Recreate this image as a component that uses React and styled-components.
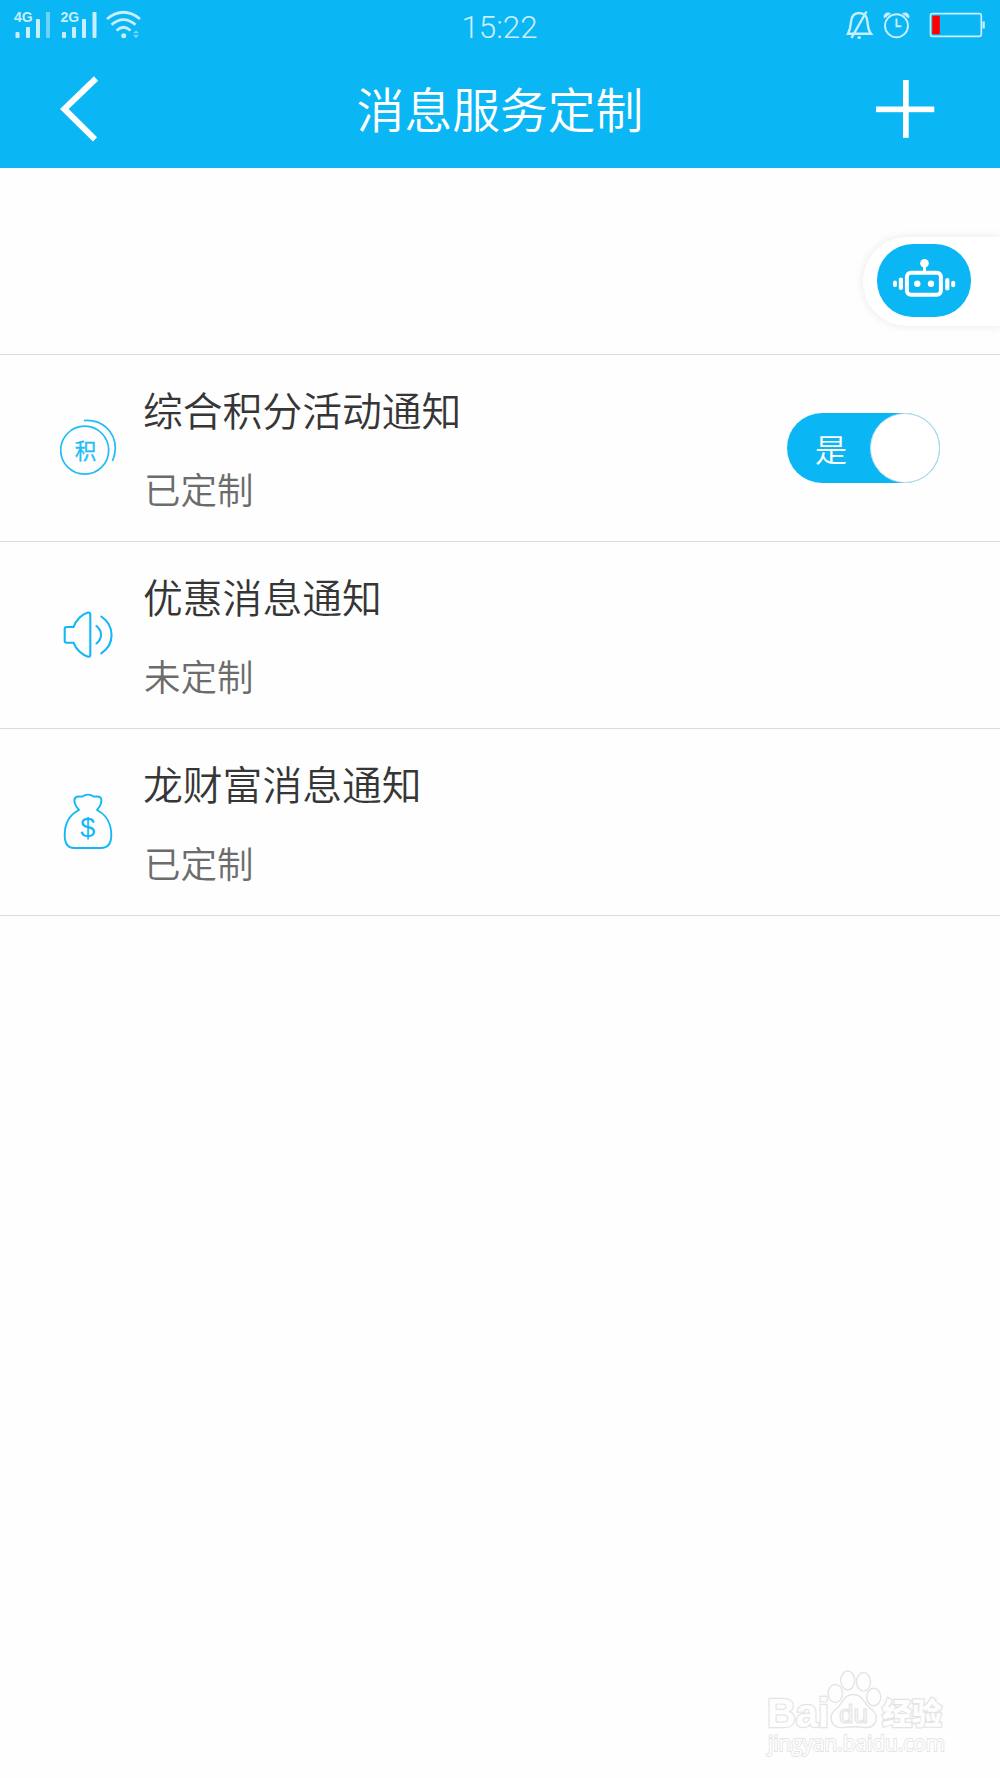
import React, {useState} from 'react';
import styled, {createGlobalStyle} from 'styled-components';

const GlobalStyle = createGlobalStyle`
    * {
        box-sizing:border-box;
    }

    body {
        margin:0;
        background-color:#fefefe;
        font-family:"Noto Sans CJK SC", "Noto Sans", sans-serif;
    }
`;

const Page = styled.div`
    width:1000px;
    height:1778px;
    display:flex;
    flex-direction:column;
    background-color:#fefefe;
    overflow:hidden;
    position:relative;
`;

const Header = styled.header`
    height:168px;
    background-color:#0bb6f4;
    color:white;
`;

const StatusBar = styled.div`
    height:54px;
    padding:0 15px 0 14px;
    display:grid;
    grid-template-columns:1fr auto 1fr;
    align-items:start;
`;

const StatusSide = styled.div`
    display:flex;
    justify-content:${({$isRight}) => $isRight ? 'flex-end' : 'flex-start'};
`;

const Clock = styled.span`
    font-family:Roboto, sans-serif;
    font-size:31.4px;
    font-weight:300;
    line-height:56px;
    color:#c8effd;
`;

const NavBar = styled.div`
    height:114px;
    padding:0 65px 0 60px;
    display:flex;
    justify-content:space-between;
    align-items:flex-start;
`;

const NavButton = styled.button`
    padding:${({$topGap}) => $topGap}px 0 0;
    border:none;
    background:none;
    display:flex;
    width:60px;
    justify-content:${({$isRight}) => $isRight ? 'flex-end' : 'flex-start'};
`;

const Title = styled.h1`
    margin:0;
    padding-left:5px;
    font-size:47.8px;
    font-weight:350;
    line-height:108px;
`;

const AssistantArea = styled.div`
    height:187px;
    padding-top:69px;
    display:flex;
    justify-content:flex-end;
    align-items:flex-start;
    border-bottom:1px solid #dcdcdc;
`;

const AssistantTab = styled.div`
    width:137px;
    height:89px;
    padding:7px 0 0 14px;
    border-radius:44px 0 0 44px;
    background-color:white;
    box-shadow:0 0 10px rgba(0, 0, 0, 0.09);
`;

const AssistantButton = styled.div`
    width:94px;
    height:73px;
    border-radius:36px;
    background-color:#0bb6f4;
    display:flex;
`;

const Row = styled.div`
    height:187px;
    padding:0 60px;
    display:flex;
    align-items:center;
    border-bottom:1px solid #dcdcdc;
`;

const IconBox = styled.div`
    width:83px;
    height:60px;
    flex:none;
`;

const RowText = styled.div`
    flex:1;
    padding-top:2px;
    display:flex;
    flex-direction:column;
    gap:20px;
`;

const RowTitle = styled.div`
    font-size:39.8px;
    font-weight:350;
    line-height:60px;
    color:#363636;
`;

const RowState = styled.div`
    padding-left:1px;
    font-size:36.5px;
    font-weight:350;
    line-height:60px;
    color:#6c6c6c;
`;

const Switch = styled.button`
    width:153px;
    height:70px;
    padding:0;
    border:none;
    border-radius:35px;
    background-color:${({$isOn}) => $isOn ? '#0bb6f4' : '#cccccc'};
    display:flex;
    justify-content:space-between;
    flex-direction:${({$isOn}) => $isOn ? 'row' : 'row-reverse'};
    align-items:center;
`;

const SwitchLabel = styled.span`
    width:83px;
    padding-left:5px;
    text-align:center;
    font-family:"Noto Sans CJK SC", sans-serif;
    font-size:32px;
    font-weight:350;
    line-height:70px;
    color:white;
`;

const Knob = styled.span`
    width:70px;
    height:70px;
    flex:none;
    border:1px solid #c3dbe7;
    border-radius:50%;
    background-color:white;
`;

const Watermark = styled.div`
    position:absolute;
    right:48px;
    bottom:14px;
    display:flex;
`;

const SignalIcon = () => (
    <svg width="130" height="54" viewBox="14 0 130 54" fill="#c8effd">
        <g fontFamily="Liberation Sans" fontWeight="700" fontSize="14">
            <text x="14" y="22">4G</text>
            <text x="60.5" y="22">2G</text>
        </g>
        <rect x="15.5" y="32" width="4" height="6" rx="1" />
        <rect x="26" y="27" width="4" height="11" rx="1" />
        <rect x="36" y="19" width="4" height="19" rx="1" />
        <rect x="46" y="12" width="4" height="26" rx="1" opacity="0.5" />
        <rect x="62" y="32" width="4" height="6" rx="1" />
        <rect x="72" y="27" width="4" height="11" rx="1" />
        <rect x="82" y="19" width="4" height="19" rx="1" />
        <rect x="92.5" y="12" width="4" height="26" rx="1" />
        <g fill="none" stroke="#c8effd" strokeWidth="2.7">
            <path d="M107 19 Q123.500 5.500 140 19" />
            <path d="M111.500 24.800 Q123.500 14.500 135.500 24.800" />
            <path d="M116.500 30.500 Q123.500 24 130.500 30.500" />
        </g>
        <circle cx="123.700" cy="35.700" r="2.500" />
        <path d="M133 33.300 L136 30.500 L139 33.300Z M133 35 H139 L136 38Z" opacity="0.6" />
    </svg>
);

const DeviceIcon = () => (
    <svg width="140" height="54" viewBox="845 0 140 54" fill="none" stroke="#c8effd" strokeWidth="2.400">
        <path d="M848 33.800 H871 C868 30 868 27 867.500 22 C867 15 864 13 859 13 C854 13 851.500 16 851 22 C850.500 28 850 30 848 33.800Z" />
        <path d="M866.500 11.500 L851.500 38" />
        <ellipse cx="859.200" cy="37.500" rx="1.800" ry="1.500" fill="#c8effd" stroke="none" />
        <circle cx="896.500" cy="25.700" r="11.500" strokeWidth="1.900" />
        <path d="M896.500 18.500 V26.300 H901.500" strokeWidth="1.900" />
        <path d="M884.300 18 C883 14 886.500 11.700 890.500 13.500Z M908.700 18 C910 14 906.500 11.700 902.500 13.500Z" fill="#c8effd" strokeWidth="0.800" />
        <rect x="930.500" y="13.700" width="50.800" height="22.600" rx="2" strokeWidth="1.700" />
        <rect x="932.300" y="15.700" width="7.500" height="18.500" fill="#fe0000" stroke="none" />
        <rect x="982.500" y="21.500" width="2.300" height="7" fill="#c8effd" stroke="none" />
    </svg>
);

const BackIcon = () => (
    <svg width="40" height="66" viewBox="60 76 40 66" fill="none" stroke="white" strokeWidth="6">
        <path d="M96 78.500 L64.300 109 L95 139.300" />
    </svg>
);

const PlusIcon = () => (
    <svg width="60" height="60" viewBox="0 0 60 60" fill="white">
        <rect x="1" y="26.500" width="58.300" height="5.700" />
        <rect x="28" y="-0.500" width="5.700" height="58.300" />
    </svg>
);

const RobotIcon = () => (
    <svg width="94" height="73" viewBox="877 244 94 73" fill="white">
        <rect x="906.900" y="272.700" width="34" height="22" rx="4" fill="none" stroke="white" strokeWidth="4" />
        <circle cx="924.500" cy="263.300" r="4.300" />
        <rect x="923" y="265" width="3" height="8" />
        <circle cx="917.300" cy="283.700" r="3.200" />
        <circle cx="931" cy="283.700" r="3.200" />
        <rect x="898.800" y="277.500" width="4.200" height="12.500" rx="2.100" />
        <rect x="893" y="280.500" width="4" height="6.500" rx="2" />
        <rect x="945.200" y="278" width="4.200" height="12.500" rx="2.100" />
        <rect x="951.200" y="280.800" width="4" height="6.500" rx="2" />
    </svg>
);

const PointsIcon = () => (
    <svg width="60" height="60" viewBox="60 418 60 60" fill="none" stroke="#1fbcf8" strokeWidth="1.700">
        <circle cx="84.700" cy="450.200" r="24" />
        <path d="M84 420.600 C102 419 115.300 432 115.300 448 C115.300 453 114.300 457 112.500 461" />
        <text x="85.500" y="458.500" textAnchor="middle" fontFamily="Noto Sans CJK SC" fontSize="21.500" fill="#1fbcf8" strokeWidth="0.300">积</text>
    </svg>
);

const SpeakerIcon = () => (
    <svg width="60" height="60" viewBox="60 605 60 60" fill="none" stroke="#12b7f7" strokeWidth="2.100" strokeLinecap="round">
        <path d="M66.500 627 H73.500 C76 620 82 614 88 612.500 Q90.300 612.200 90.300 614.500 V655 Q90.300 657 88 656.700 C82 655 76 649.500 73.500 642.700 H66.500 Q64.700 642.700 64.700 641 V629 Q64.700 627 66.500 627Z" />
        <path d="M96.500 626 C102.500 631 102.500 638.500 96.500 643.500" />
        <path d="M101.300 616.500 C115 626 115 644 101.300 653.300" />
    </svg>
);

const MoneyIcon = () => (
    <svg width="60" height="60" viewBox="60 792 60 60" fill="none" stroke="#12b7f7" strokeWidth="1.900" strokeLinejoin="round">
        <path d="M79 810 C75 806 73 800 75.500 797.500 C77.500 795.700 80.500 797 82.500 796.500 C85.500 794 90.500 794 93.500 796.500 C95.500 797 98.500 795.700 100.500 797.500 C102.500 800 101 806 97 810 C107 815 111.300 825 111.300 835 C111.300 844 108 848 101 848 H74 C67.500 848 64.700 844 64.700 835 C64.700 824 69 815 79 810Z" />
        <text x="87.800" y="837.300" textAnchor="middle" fontFamily="Liberation Sans" fontSize="27" fill="#12b7f7" stroke="none">$</text>
    </svg>
);

const WatermarkLogo = () => (
    <svg width="200" height="96" viewBox="752 1668 200 96" fill="#fefefe" stroke="#e4e4e4" strokeWidth="1.400">
        <g fontFamily="Liberation Sans" fontWeight="700" paintOrder="stroke" strokeWidth="2.400">
            <text x="767" y="1726.500" fontSize="40" textLength="62" lengthAdjust="spacingAndGlyphs">Bai</text>
            <text x="882" y="1723.500" fontFamily="Noto Sans CJK SC" fontSize="30" fontWeight="900">经验</text>
        </g>
        <ellipse cx="835.300" cy="1693.500" rx="7.300" ry="9" />
        <ellipse cx="847.700" cy="1680.500" rx="7" ry="9.500" />
        <ellipse cx="863.500" cy="1681.800" rx="7" ry="9.300" />
        <ellipse cx="873.700" cy="1697" rx="7" ry="8.800" />
        <path d="M853 1694.500 C864 1694.500 864 1705 871 1709 C880 1715 877 1728 865 1727.500 C857 1726.500 851 1726.500 844 1727.500 C831 1729 827 1716 836 1709 C843 1704 843 1694.500 853 1694.500Z" />
        <text x="853.500" y="1722.500" textAnchor="middle" fontFamily="Liberation Sans" fontSize="26" strokeWidth="1.200">du</text>
        <text x="768" y="1750.500" fontFamily="Open Sans" fontSize="22" strokeWidth="1.800" paintOrder="stroke" textLength="177" lengthAdjust="spacingAndGlyphs">jingyan.baidu.com</text>
    </svg>
);

const services = [
    {title: '综合积分活动通知', state: '已定制', Icon: PointsIcon, hasSwitch: true},
    {title: '优惠消息通知', state: '未定制', Icon: SpeakerIcon},
    {title: '龙财富消息通知', state: '已定制', Icon: MoneyIcon},
];

const App = () => {
    const [isOn, setIsOn] = useState(true);

    return(
        <>
            <GlobalStyle />
            <Page>
                <Header>
                    <StatusBar>
                        <StatusSide><SignalIcon /></StatusSide>
                        <Clock>15:22</Clock>
                        <StatusSide $isRight><DeviceIcon /></StatusSide>
                    </StatusBar>
                    <NavBar>
                        <NavButton $topGap={22}><BackIcon /></NavButton>
                        <Title>消息服务定制</Title>
                        <NavButton $topGap={26} $isRight><PlusIcon /></NavButton>
                    </NavBar>
                </Header>
                <AssistantArea>
                    <AssistantTab>
                        <AssistantButton><RobotIcon /></AssistantButton>
                    </AssistantTab>
                </AssistantArea>
                {services.map(({title, state, Icon, hasSwitch}) => (
                    <Row key={title}>
                        <IconBox><Icon /></IconBox>
                        <RowText>
                            <RowTitle>{title}</RowTitle>
                            <RowState>{state}</RowState>
                        </RowText>
                        {hasSwitch && (
                            <Switch $isOn={isOn} onClick={() => setIsOn(!isOn)}>
                                <SwitchLabel>{isOn ? '是' : '否'}</SwitchLabel>
                                <Knob />
                            </Switch>
                        )}
                    </Row>
                ))}
                <Watermark><WatermarkLogo /></Watermark>
            </Page>
        </>
    );
};

export default App;
